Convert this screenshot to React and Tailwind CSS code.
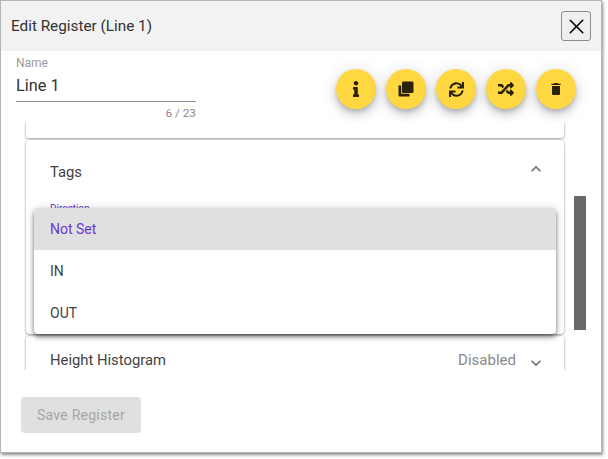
import { FaInfo, FaSync, FaRandom } from 'react-icons/fa';
import { X } from 'lucide-react';

// copy and trash in the picture are not the FA shapes, drawn by hand
const CopyIcon = () => (
  <svg width="16" height="16" viewBox="0 0 16 16" fill="currentColor">
    <rect x="4" y="0.5" width="11.5" height="11.5" rx="1.2" />
    <path d="M0.5 4.5h2.7v8.3h8.3v2.7H2a1.5 1.5 0 0 1-1.5-1.5z" />
  </svg>
);

const TrashIcon = () => (
  <svg width="10" height="12" viewBox="0 0 10 12" fill="currentColor">
    <path d="M3.4 0h3.2l.4.8H9.6v1.3H.4V.8H3z" />
    <path d="M1 3h8v7.8A1.2 1.2 0 0 1 7.8 12H2.2A1.2 1.2 0 0 1 1 10.8z" />
  </svg>
);

const ExpandLess = ({ className }) => (
  <svg width="20" height="20" viewBox="0 0 24 24" fill="currentColor" className={className}>
    <path d="M12 8l-6 6 1.41 1.41L12 10.83l4.59 4.58L18 14z" />
  </svg>
);

const ExpandMore = ({ className }) => (
  <svg width="20" height="20" viewBox="0 0 24 24" fill="currentColor" className={className}>
    <path d="M16.59 8.59L12 13.17 7.41 8.59 6 10l6 6 6-6z" />
  </svg>
);

const fabs = [
  { id: 'info', icon: <FaInfo size={16} /> },
  { id: 'copy', icon: <CopyIcon /> },
  { id: 'sync', icon: <FaSync size={15} /> },
  { id: 'random', icon: <FaRandom size={16} /> },
  { id: 'trash', icon: <TrashIcon /> },
];

const cardShadow = 'shadow-[0_1px_3px_0_rgba(0,0,0,0.35),0_0_2px_0_rgba(0,0,0,0.12)]';

function Fab({ children }) {
  return (
    <button className="flex h-10 w-10 items-center justify-center rounded-full bg-[#ffd740] text-[#2b2208] shadow-[0_3px_5px_-1px_rgba(0,0,0,0.2),0_6px_10px_0_rgba(0,0,0,0.14),0_1px_18px_0_rgba(0,0,0,0.12)]">
      {children}
    </button>
  );
}

export default function App() {
  return (
    <div className="h-[459px] w-[608px] overflow-hidden bg-white font-['Roboto',sans-serif]">
      <div className="flex h-[453px] w-[602px] flex-col border border-[#b4b4b4] bg-white shadow-[1px_2px_3px_rgba(0,0,0,0.45)]">
        {/* Title bar */}
        <div className="flex h-[50px] shrink-0 items-center justify-between bg-[#f2f2f2] pl-[10px] pr-[10px]">
          <span className="text-[15.3px] text-[#333333]">Edit Register (Line 1)</span>
          <button className="flex h-[30px] w-[30px] items-center justify-center rounded-[3px] border border-[#8c8c8c] bg-[#efefef] text-black">
            <X size={25} strokeWidth={1.5} />
          </button>
        </div>

        {/* Name field and actions */}
        <div className="flex h-[71px] shrink-0 justify-between pl-[15px] pr-[25px]">
          <div className="w-[180px]">
            <div className="pt-[6px] text-[12px] leading-[12px] text-[#9a9a9a]">Name</div>
            <div className="flex h-[33px] items-center border-b border-[#8f8f8f] pt-[2px] text-[16.3px] text-[#333333]">Line 1</div>
            <div className="pt-[4px] text-right text-[11.8px] leading-[14px] text-[#8a8a8a]">6 / 23</div>
          </div>
          <div className="flex gap-[10px] pt-[18px]">
            {fabs.map((f) => (
              <Fab key={f.id}>{f.icon}</Fab>
            ))}
          </div>
        </div>

        {/* Scroll area */}
        <div className="flex h-[248px] shrink-0 overflow-hidden pl-[25px]">
          <div className="flex w-[538px] shrink-0 flex-col gap-[2px]">
            <div className={`h-[16px] shrink-0 rounded-b-[3px] bg-white ${cardShadow}`} />
            <div className={`relative flex h-[194px] shrink-0 flex-col rounded-[4px] bg-white ${cardShadow}`}>
              <div className="flex h-[64px] items-center justify-between pl-[24px] pr-[18px]">
                <span className="text-[14.8px] text-[#424242]">Tags</span>
                <ExpandLess className="mb-[7px] text-[#707070]" />
              </div>
              <div className="pl-[24px] text-[10px] leading-[10px] text-[#6a35d0]">Direction</div>

              {/* Open select menu */}
              <div className="absolute left-[8px] top-[68px] w-[522px] overflow-hidden rounded-[4px] bg-white shadow-[0_2px_4px_-1px_rgba(0,0,0,0.45),0_4px_5px_0_rgba(0,0,0,0.2),0_1px_10px_0_rgba(0,0,0,0.18)]">
                <div className="flex h-[42px] items-center bg-[#e0e0e0] pl-[16px] text-[14px] text-[#6a35d0]">Not Set</div>
                <div className="flex h-[42px] items-center pl-[16px] text-[14px] text-[#424242]">IN</div>
                <div className="flex h-[42px] items-center pl-[16px] text-[14px] text-[#424242]">OUT</div>
              </div>
            </div>
            <div className={`flex h-[48px] shrink-0 items-center justify-between rounded-t-[3px] bg-white pl-[24px] pr-[18px] ${cardShadow}`}>
              <span className="pt-[1px] text-[14.8px] text-[#424242]">Height Histogram</span>
              <div className="flex items-center gap-[10px]">
                <span className="pt-[1px] text-[15px] text-[#8a8a8a]">Disabled</span>
                <ExpandMore className="mt-[6px] text-[#707070]" />
              </div>
            </div>
          </div>
          <div className="ml-[10px] mt-[74px] h-[134px] w-[12px] shrink-0 bg-[#696969]" />
        </div>

        {/* Footer */}
        <div className="pl-[20px] pt-[27px]">
          <button className="h-[36px] w-[120px] rounded-[4px] bg-[#e0e0e0] text-[14px] font-normal tracking-[0.25px] text-[#a6a6a6]">Save Register</button>
        </div>
      </div>
    </div>
  );
}
